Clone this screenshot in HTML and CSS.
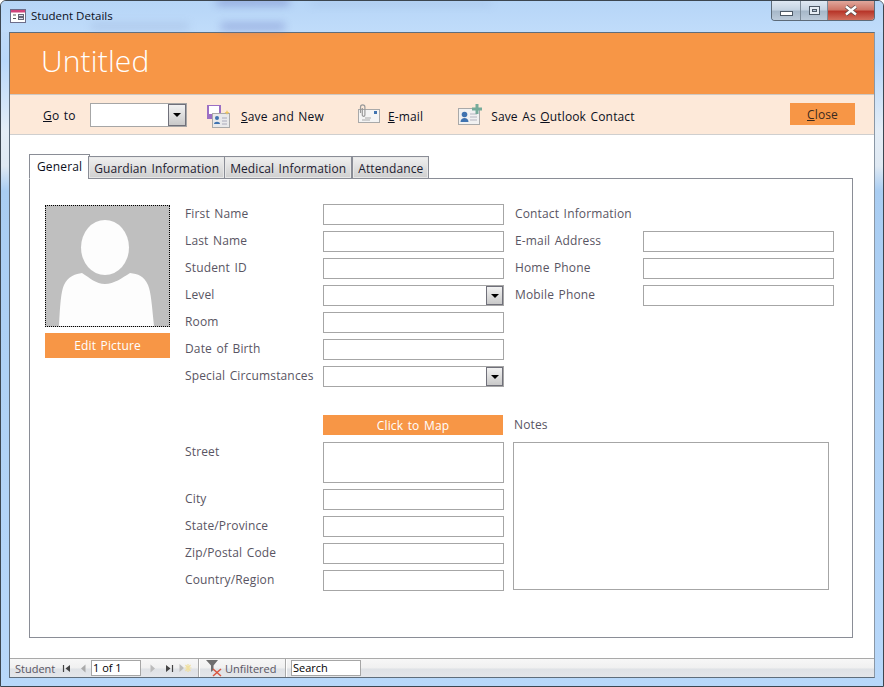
FILE: index.html
```html
<!DOCTYPE html>
<html lang="en">
<head>
  <meta charset="UTF-8" />
  <title>Student Details</title>
  <link rel="stylesheet" href="styles.css">
</head>
<body>

  <div class="window">
    <div class="titlebar">
      <span class="blur blur-a"></span>
      <span class="blur blur-b"></span>
      <span class="blur blur-c"></span>
      <span class="blur blur-d"></span>
      <svg class="form-icon" width="16" height="14" viewBox="0 0 16 14">
        <rect x="0.5" y="0.5" width="15" height="13" fill="#fff" stroke="#6d6d8a"/>
        <rect x="1" y="1" width="14" height="2.5" fill="#d0447c"/>
        <path d="M3 6h3M3 9.500h3" stroke="#555" stroke-width="1"/>
        <rect x="8.500" y="5.500" width="5" height="2" fill="#dde" stroke="#667"/>
        <rect x="8.500" y="8.500" width="5" height="2" fill="#dde" stroke="#667"/>
      </svg>
      <span class="title">Student Details</span>
      <div class="caption-btns">
        <div class="cap cap-min"><i></i></div>
        <div class="cap cap-max"><i></i></div>
        <div class="cap cap-close">
          <svg width="16" height="11" viewBox="0 0 16 11">
            <path d="M3 1.500 L13 9.500 M13 1.500 L3 9.500" stroke="#5a4a4a" stroke-width="4"/>
            <path d="M3 1.500 L13 9.500 M13 1.500 L3 9.500" stroke="#fff" stroke-width="2.400"/>
          </svg>
        </div>
      </div>
    </div>

    <div class="client">
      <div class="header">Untitled</div>

      <div class="toolbar">
        <span class="goto"><u>G</u>o to</span>
        <div class="combo combo-goto"><span class="drop"><b></b></span></div>

        <div class="tool tool-save">
          <svg width="24" height="24" viewBox="0 0 24 24">
            <rect x="1" y="1" width="14" height="14" fill="#9c6fc4"/>
            <rect x="3" y="2" width="10" height="8" fill="#fff"/>
            <rect x="6.500" y="9.500" width="17" height="14" fill="#e9e9ea" stroke="#a9a9a9"/>
            <circle cx="11" cy="14" r="2" fill="#3f73b0"/>
            <path d="M8 20c0-3 6-3 6 0z" fill="#3f73b0"/>
            <path d="M16 14h5M16 17h5M16 20h5" stroke="#aab" stroke-width="1"/>
            <path d="M21 6l.7 1.800 1.800.7-1.800.7-.7 1.800-.7-1.800-1.800-.7 1.800-.7z" fill="#f0c860"/>
          </svg>
          <span><u>S</u>ave and New</span>
        </div>

        <div class="tool tool-mail">
          <svg width="22" height="20" viewBox="0 0 22 20">
            <rect x="0.500" y="5.500" width="21" height="13" fill="#f4f4f4" stroke="#a9a9a9"/>
            <rect x="16" y="7" width="3" height="3" fill="#3f73b0"/>
            <path d="M7 14h6M4 16h8" stroke="#aaa" stroke-width="1"/>
            <path d="M2.500 9V3a2.200 2.200 0 0 1 4.400 0v8a1.300 1.300 0 0 1-2.600 0V4" fill="none" stroke="#9a9a9a" stroke-width="1.200"/>
          </svg>
          <span><u>E</u>-mail</span>
        </div>

        <div class="tool tool-contact">
          <svg width="24" height="22" viewBox="0 0 24 22">
            <rect x="0.500" y="4.500" width="21" height="16" fill="#f1f1f1" stroke="#a9a9a9"/>
            <circle cx="6.500" cy="10.500" r="2.800" fill="#3f73b0"/>
            <path d="M2.500 18c0-5.500 8-5.500 8 0z" fill="#3f73b0"/>
            <path d="M12 10h7M12 13h7M12 16h7" stroke="#b5b5c0" stroke-width="1"/>
            <path d="M17.500 0h3v3.500h3.500v3h-3.500V10h-3V6.500H14v-3h3.500z" fill="#76ab9a"/>
          </svg>
          <span>Save As <u>O</u>utlook Contact</span>
        </div>

        <button class="btn btn-close"><u>C</u>lose</button>
      </div>

      <div class="body">
        <div class="tabs">
          <div class="tab active">General</div>
          <div class="tab">Guardian Information</div>
          <div class="tab">Medical Information</div>
          <div class="tab">Attendance</div>
        </div>

        <div class="page">
          <div class="photo-col">
            <div class="photo">
              <svg width="123" height="120" viewBox="0 0 123 120">
                <ellipse cx="59" cy="41.500" rx="24" ry="27.500" fill="#fdfdfd"/>
                <path d="M13 120 C14 100 15 85 18 79 C22 70 30 68 36 67 C44 72 50 78 59 78 C68 78 76 72 84 67 C92 68 98 70 102 79 C105 86 106 100 108 120 Z" fill="#fdfdfd"/>
              </svg>
            </div>
            <button class="btn btn-edit">Edit Picture</button>
          </div>

          <div class="main-col">
            <div class="top">
              <div class="fields">
                <label>First Name</label><div class="field"></div>
                <label>Last Name</label><div class="field"></div>
                <label>Student ID</label><div class="field"></div>
                <label>Level</label><div class="field combo"><span class="drop"><b></b></span></div>
                <label>Room</label><div class="field"></div>
                <label>Date of Birth</label><div class="field"></div>
                <label>Special Circumstances</label><div class="field combo"><span class="drop"><b></b></span></div>
              </div>
              <div class="fields contact">
                <label class="wide">Contact Information</label>
                <label>E-mail Address</label><div class="field"></div>
                <label>Home Phone</label><div class="field"></div>
                <label>Mobile Phone</label><div class="field"></div>
              </div>
            </div>

            <div class="bottom">
              <div class="fields">
                <span></span><button class="btn btn-map">Click to Map</button>
                <label>Street</label><div class="field field-street"></div>
                <label>City</label><div class="field"></div>
                <label>State/Province</label><div class="field"></div>
                <label>Zip/Postal Code</label><div class="field"></div>
                <label>Country/Region</label><div class="field"></div>
              </div>
              <div class="notes">
                <label>Notes</label>
                <div class="field notes-box"></div>
              </div>
            </div>
          </div>
        </div>
      </div>

      <div class="statusbar">
        <span class="rec-label">Student</span>
        <span class="nav"><svg width="9" height="9" viewBox="0 0 9 9"><path d="M1.500 1v7" stroke="#444" stroke-width="1.200"/><path d="M8 1v7L3.500 4.500z" fill="#444"/></svg></span>
        <span class="nav nav-prev"><svg width="6" height="9" viewBox="0 0 6 9"><path d="M5.500 0.500v8L1 4.500z" fill="#aaa"/></svg></span>
        <div class="rec-box">1 of 1</div>
        <span class="nav nav-next"><svg width="6" height="9" viewBox="0 0 6 9"><path d="M0.500 0.500v8L5 4.500z" fill="#bbb"/></svg></span>
        <span class="nav nav-last"><svg width="9" height="9" viewBox="0 0 9 9"><path d="M1 1v7l4.500-3.500z" fill="#444"/><path d="M7.500 1v7" stroke="#444" stroke-width="1.200"/></svg></span>
        <span class="nav nav-new"><svg width="14" height="10" viewBox="0 0 14 10"><path d="M0.500 1v8L5 5z" fill="#bbb"/><path d="M9 1v8M5.500 5h7M6.500 2l5 6M11.500 2l-5 6" stroke="#f0e0a0" stroke-width="1.200"/></svg></span>
        <span class="sep sep-a"></span>
        <svg class="filter-icon" width="17" height="17" viewBox="0 0 17 17">
          <path d="M0 0h12L7.500 5.500V10L5 12V5.500z" fill="#6e6e6e"/>
          <path d="M7 9l8 7M15 9l-8 7" stroke="#d9553f" stroke-width="1.500"/>
        </svg>
        <span class="filter-label">Unfiltered</span>
        <span class="sep sep-b"></span>
        <div class="search">Search</div>
      </div>
    </div>
  </div>

</body>
</html>
```

FILE: styles.css
```css
html, body {
  margin: 0;
  padding: 0;
  background: #fff;
}

body {
  font-family: 'Open Sans', 'Noto Sans', sans-serif;
  font-size: 12px;
  letter-spacing: 0.15px;
  word-spacing: 1.2px;
  color: #595563;
}

.window {
  position: relative;
  width: 884px;
  height: 687px;
  box-sizing: border-box;
  border: 1px solid #3c4650;
  border-radius: 6px 6px 0 0;
  padding: 0 8px 9px 8px;
  overflow: hidden;
  background: linear-gradient(to bottom, #c4dcf6 0, #b9d8fa 60px, #e4edf6 130px, #dfe9f3 165px, #a9cdf2 190px, #b8d8fa 100%);
}

.titlebar {
  height: 31px;
  display: flex;
  align-items: flex-start;
  margin: 0 -8px;
  padding-left: 9px;
  background: linear-gradient(to bottom, #b6d5f7, #c0dcfa);
}

.blur {
  position: absolute;
  background: #7f93c0;
  filter: blur(4px);
  opacity: 0.35;
}
.blur-a { left: 216px; top: -2px; width: 72px; height: 6px; opacity: 0.6; background: #6a78c0; }
.blur-b { left: 90px; top: 22px; width: 98px; height: 7px; opacity: 0.25; }
.blur-c { left: 220px; top: 22px; width: 64px; height: 7px; opacity: 0.45; background: #6a78c0; }
.blur-d { left: 310px; top: 0; width: 180px; height: 5px; opacity: 0.2; }

.form-icon {
  position: relative;
  margin-top: 8px;
  flex: none;
}

.title {
  position: relative;
  margin: 6px 0 0 5px;
  color: #0b0f1c;
  line-height: 17px;
  font-size: 11.500px;
  letter-spacing: 0;
  word-spacing: 0;
}

.caption-btns {
  position: relative;
  display: flex;
  margin-left: auto;
  margin-right: 8px;
  height: 19px;
  border: 1px solid #5c6a78;
  border-top: none;
  border-radius: 0 0 4px 4px;
  overflow: hidden;
}

.cap {
  display: flex;
  align-items: center;
  justify-content: center;
  width: 28px;
  background: linear-gradient(to bottom, #dfe8f2 0, #c6d4e2 45%, #a7b8c9 55%, #bccbda 100%);
  border-right: 1px solid #7c8a98;
}

.cap-min i {
  display: block;
  width: 11px;
  height: 3px;
  margin-top: 5px;
  background: #fff;
  border: 1px solid #4d5966;
}

.cap-max {
  width: 26px;
}

.cap-max i {
  display: block;
  width: 5px;
  height: 3px;
  background: transparent;
  border: 2px solid #e6edf4;
  outline: 1px solid #4d5966;
  box-shadow: inset 0 0 0 1px #4d5966;
}

.cap-close {
  width: 46px;
  border-right: none;
  background: linear-gradient(to bottom, #e0a79c 0, #cf7667 45%, #b8362a 55%, #d2705e 100%);
}

.client {
  width: 866px;
  height: 646px;
  background: #fff;
  border: 1px solid #5f6d7b;
  border-right-color: #8a97a5;
  box-sizing: border-box;
  display: flex;
  flex-direction: column;
}

.header {
  height: 61px;
  flex: none;
  box-sizing: border-box;
  padding: 6px 0 0 31px;
  background: #f79646;
  color: #fff;
  font-size: 30px;
  font-weight: 300;
  line-height: 44px;
}

.toolbar {
  height: 41px;
  flex: none;
  box-sizing: border-box;
  display: flex;
  align-items: flex-start;
  padding-left: 33px;
  background: #fde9d9;
  border-top: 1px solid #cfc8c2;
  border-bottom: 1px solid #cfcfcf;
  color: #0b0f1c;
}

.goto {
  margin-top: 12px;
  width: 47px;
  line-height: 18px;
}

.combo-goto {
  position: relative;
  width: 97px;
  height: 24px;
  margin-top: 8px;
  box-sizing: border-box;
  background: #fff;
  border: 1px solid #a6a6a6;
}

.combo-goto .drop {
  width: 18px;
}

.drop {
  position: absolute;
  top: 0;
  right: 0;
  bottom: 0;
  width: 17px;
  display: flex;
  align-items: center;
  justify-content: center;
  box-sizing: border-box;
  border: 1px solid #70707a;
  background: linear-gradient(to bottom, #f2f2f2, #c9c9c9);
}

.drop b {
  width: 0;
  height: 0;
  border-left: 4px solid transparent;
  border-right: 4px solid transparent;
  border-top: 4px solid #000;
}

.tool {
  display: flex;
  align-items: flex-start;
  line-height: 18px;
}
.tool span { margin-top: 13px; margin-left: 9px; }
.tool svg { flex: none; margin-top: 9px; }

.tool-save { margin-left: 19px; }
.tool-save span { margin-left: 11px; }

.tool-mail { margin-left: 34px; }
.tool-mail span { margin-left: 8px; }

.tool-contact { margin-left: 35px; }

.btn {
  display: block;
  padding: 0;
  border: none;
  background: #f79646;
  font-family: inherit;
  font-size: 12px;
  letter-spacing: inherit;
  word-spacing: inherit;
  color: #fff;
  text-align: center;
}

.btn-close {
  width: 65px;
  height: 22px;
  margin: 8px 19px 0 auto;
  color: #3a2a20;
}

.body {
  flex: 1;
  padding: 19px 21px 0 19px;
}

.tabs {
  display: flex;
  align-items: flex-end;
  height: 25px;
  position: relative;
  z-index: 1;
  margin-bottom: -1px;
}

.tab {
  height: 23px;
  box-sizing: border-box;
  padding: 0 5px;
  line-height: 23px;
  letter-spacing: 0.1px;
  color: #1d2030;
  background: linear-gradient(to bottom, #f0f0f0, #cfcfcf);
  border: 1px solid #8a8d96;
  margin-left: -1px;
  box-shadow: inset 0 0 0 1px #e8e8e8;
}

.tab:last-child {
  margin-left: 0;
}

.tab.active {
  height: 25px;
  margin-left: 0;
  margin-right: -1px;
  padding: 0 7px;
  line-height: 23px;
  letter-spacing: 0.15px;
  background: #fff;
  border-bottom-color: #fff;
  box-shadow: none;
  color: #0b0f1c;
}

.page {
  height: 460px;
  box-sizing: border-box;
  display: flex;
  padding: 25px 18px 0 15px;
  border: 1px solid #8a8d96;
}

.photo-col {
  width: 125px;
  flex: none;
  padding-top: 1px;
}

.photo {
  width: 125px;
  height: 122px;
  box-sizing: border-box;
  border: 1px dotted #000;
  background: #bfbfbf;
  display: flex;
  overflow: hidden;
}

.btn-edit {
  width: 125px;
  height: 25px;
  margin-top: 6px;
}

.main-col {
  margin-left: 15px;
  flex: 1;
}

.top, .bottom {
  display: flex;
}

.fields {
  display: grid;
  grid-template-columns: 138px 181px;
  grid-auto-rows: 21px;
  row-gap: 6px;
  width: 319px;
  flex: none;
}

.fields label {
  padding-top: 1px;
  line-height: 18px;
}

.field {
  position: relative;
  box-sizing: border-box;
  background: #fff;
  border: 1px solid #a6a6a6;
}

.contact {
  grid-template-columns: 128px 191px;
  margin-left: 11px;
}

.contact .wide {
  grid-column: 1 / 3;
}

.bottom {
  margin-top: 28px;
}

.bottom .fields {
  grid-template-rows: 21px 41px;
}

.btn-map {
  width: 180px;
  height: 20px;
}

.notes {
  margin-left: 9px;
}

.notes label {
  display: block;
  margin-left: 1px;
  padding-top: 1px;
  height: 26px;
  line-height: 18px;
}

.notes-box {
  width: 316px;
  height: 148px;
}

.statusbar {
  height: 19px;
  flex: none;
  box-sizing: border-box;
  display: flex;
  align-items: center;
  border-top: 1px solid #a9a9a9;
  background: linear-gradient(to bottom, #f7f7f7 0, #f0f0f0 50%, #dfe2e6 55%, #e4e6ea 100%);
  font-size: 11px;
  letter-spacing: 0;
  word-spacing: 0;
  padding-left: 5px;
}

.rec-label {
  width: 47px;
}

.nav {
  display: flex;
  width: 9px;
}

.nav-prev { margin-left: 9px; width: 6px; }
.nav-next { margin-left: 9px; width: 6px; }
.nav-last { margin-left: 9px; }
.nav-new { margin-left: 5px; width: 14px; }

.rec-box, .search {
  height: 16px;
  box-sizing: border-box;
  background: #fff;
  border: 1px solid #a6a6a6;
  color: #000;
  line-height: 14px;
  padding-left: 1px;
}

.rec-box {
  width: 50px;
  margin-left: 5px;
}

.sep {
  width: 1px;
  height: 18px;
  background: #a9a9a9;
  box-shadow: 1px 0 0 #fff;
}

.sep-a { margin-left: 5px; }

.filter-icon {
  margin-left: 7px;
  flex: none;
}

.filter-label {
  margin-left: 2px;
  width: 52px;
}

.sep-b { margin-left: 8px; }

.search {
  width: 70px;
  margin-left: 5px;
}
```
